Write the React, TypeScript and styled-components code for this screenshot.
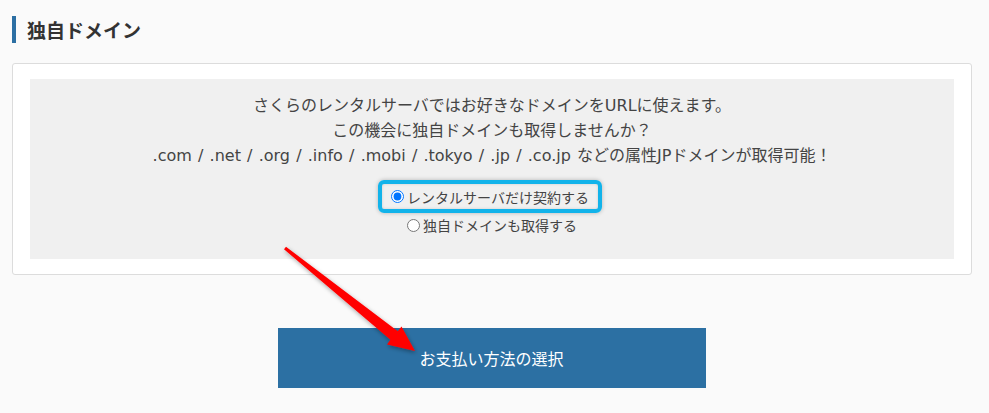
import React, { useState } from 'react';
import styled, { createGlobalStyle } from 'styled-components';

const GlobalStyle = createGlobalStyle`
  html, body {
    margin: 0;
    padding: 0;
    background: #fafafa;
  }
  body {
    font-family: "Noto Sans CJK JP", "Noto Sans", sans-serif;
    color: #444;
  }
`;

export default function App() {
  const [plan, setPlan] = useState('server');

  return (
    <Page>
      <GlobalStyle />
      <Heading>独自ドメイン</Heading>
      <Card>
        <InfoBox>
          <Lead>
            さくらのレンタルサーバではお好きなドメインをURLに使えます。<br />
            この機会に独自ドメインも取得しませんか？<br />
            .com / .net / .org / .info / .mobi / .tokyo / .jp / .co.jp などの属性JPドメインが取得可能！
          </Lead>
          <RadioGroup>
            <Highlight>
              <RadioLabel>
                <Radio
                  type="radio"
                  name="domain"
                  checked={plan === 'server'}
                  onChange={() => setPlan('server')}
                />
                レンタルサーバだけ契約する
              </RadioLabel>
            </Highlight>
            <RadioLabel>
              <Radio
                type="radio"
                name="domain"
                checked={plan === 'domain'}
                onChange={() => setPlan('domain')}
              />
              独自ドメインも取得する
            </RadioLabel>
          </RadioGroup>
        </InfoBox>
      </Card>
      <Actions>
        <PrimaryButton type="button">お支払い方法の選択</PrimaryButton>
      </Actions>
      {/* red annotation arrow over the page */}
      <Annotation width="989" height="413" viewBox="0 0 989 413">
        <defs>
          <filter id="arrowShadow" x="-20%" y="-20%" width="140%" height="140%">
            <feDropShadow dx="1" dy="2" stdDeviation="2" floodColor="#000" floodOpacity="0.35" />
          </filter>
        </defs>
        <polygon
          points="286,246.8 397.8,331.2 401.5,326.5 415,351 387,344.5 390.4,339.8 284,249.2"
          fill="#ff0000"
          filter="url(#arrowShadow)"
        />
      </Annotation>
    </Page>
  );
}

const Page = styled.div`
  position: relative;
  width: 989px;
  height: 413px;
  box-sizing: border-box;
  padding: 16px 17px 0 12px;
  overflow: hidden;
`;

const Heading = styled.h2`
  margin: 0;
  height: 27px;
  line-height: 27px;
  border-left: 4px solid #2c6fa3;
  padding-left: 11px;
  font-size: 19px;
  font-weight: 700;
  color: #333;
`;

const Card = styled.div`
  margin-top: 20px;
  background: #fff;
  border: 1px solid #dcdcdc;
  border-radius: 3px;
  padding: 15px 17px;
`;

const InfoBox = styled.div`
  background: #f0f0f0;
  padding: 14px 0 22px;
  text-align: center;
`;

const Lead = styled.p`
  margin: 0;
  font-family: "DejaVu Sans", "Noto Sans CJK JP", sans-serif;
  font-size: 16px;
  line-height: 25px;
  word-spacing: 1.1px;
  color: #444;
`;

const RadioGroup = styled.div`
  margin-top: 12px;
  display: flex;
  flex-direction: column;
  align-items: center;
`;

const Highlight = styled.div`
  border: 4px solid #12b3ea;
  border-radius: 6px;
  padding: 0 9px;
  height: 25px;
  display: flex;
  align-items: center;
  box-shadow: 0 0 4px rgba(0, 0, 0, 0.25), inset 0 0 3px rgba(0, 0, 0, 0.15);
  margin-left: -4px;
`;

const RadioLabel = styled.label`
  display: flex;
  align-items: center;
  height: 24px;
  font-size: 14px;
  color: #444;
  cursor: pointer;
`;

const Radio = styled.input`
  margin: 0 3px 0 0;
  width: 13px;
  height: 13px;
  accent-color: #0075ff;
`;

const Actions = styled.div`
  margin-top: 53px;
  display: flex;
  justify-content: center;
`;

const PrimaryButton = styled.button`
  width: 428px;
  height: 60px;
  border: none;
  background: #2c70a3;
  color: #fff;
  font-family: "Noto Sans CJK JP", "Noto Sans", sans-serif;
  font-size: 16px;
  cursor: pointer;
  padding-left: 5px;
`;

const Annotation = styled.svg`
  position: absolute;
  left: 0;
  top: 0;
  pointer-events: none;
`;
